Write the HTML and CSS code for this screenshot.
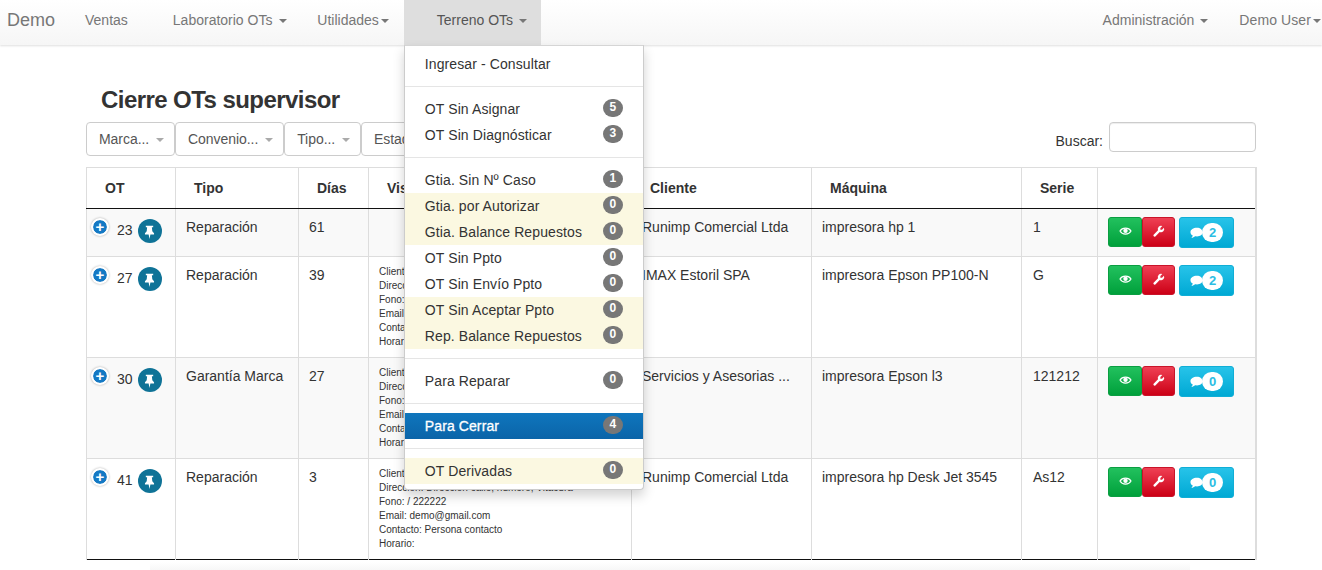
FILE: index.html
```html
<!DOCTYPE html>
<html lang="es">
<head>
<meta charset="utf-8">
<title>Cierre OTs supervisor</title>
<link rel="stylesheet" href="styles.css">
</head>
<body>
<svg class="defs" width="0" height="0" aria-hidden="true">
  <symbol id="i-pin" viewBox="0 0 24 24"><path d="M7.800 5.500h8.400v1.700h-1.500l.5 4.600 2 2.200v1.500h-4.200L12 20.500l-1-5H6.800v-1.500l2-2.200.5-4.600H7.800z"/></symbol>
  <symbol id="i-eye" viewBox="0 0 14 12"><path class="eye-line" d="M1 5.500C3.500 1.200 10.500 1.200 13 5.500C10.500 10 3.500 10 1 5.500z"/><circle cx="7" cy="5.300" r="2.400"/></symbol>
  <symbol id="i-wrench" viewBox="0 0 16 16"><path d="M12.700 1.300A4 4 0 0 0 7.400 6.500L2 11.900A1.500 1.500 0 0 0 4.100 14L9.500 8.600A4 4 0 0 0 14.700 3.300L12.300 5.700H10.300V3.700z"/></symbol>
  <symbol id="i-comment" viewBox="0 0 14 14"><path d="M7.500 2C3.500 2 .5 4 .5 6.700c0 1.500 1 2.800 2.500 3.600-.2 1-.8 1.900-1.500 2.500 1.700-.1 3-.8 4-1.700.6.100 1.300.1 2 .1 3.500 0 6-1.900 6-4.500S11 2 7.500 2z"/></symbol>
</svg>

<nav class="navbar">
  <a class="brand">Demo</a>
  <ul class="nav-list">
    <li class="nav-item nav-item-wide"><a>Ventas</a></li>
    <li class="nav-item"><a>Laboratorio OTs <span class="caret caret-wide"></span></a></li>
    <li class="nav-item"><a>Utilidades<span class="caret"></span></a></li>
    <li class="nav-item nav-item-open">
      <a>Terreno OTs <span class="caret"></span></a>
      <div class="dropdown">
        <a class="dd-item">Ingresar - Consultar</a>
        <hr class="dd-divider">
        <a class="dd-item">OT Sin Asignar <span class="badge">5</span></a>
        <a class="dd-item">OT Sin Diagnósticar <span class="badge">3</span></a>
        <hr class="dd-divider">
        <a class="dd-item">Gtia. Sin Nº Caso <span class="badge">1</span></a>
        <a class="dd-item dd-warn">Gtia. por Autorizar <span class="badge">0</span></a>
        <a class="dd-item dd-warn">Gtia. Balance Repuestos <span class="badge">0</span></a>
        <a class="dd-item">OT Sin Ppto <span class="badge">0</span></a>
        <a class="dd-item">OT Sin Envío Ppto <span class="badge">0</span></a>
        <a class="dd-item dd-warn">OT Sin Aceptar Ppto <span class="badge">0</span></a>
        <a class="dd-item dd-warn">Rep. Balance Repuestos <span class="badge">0</span></a>
        <hr class="dd-divider">
        <a class="dd-item">Para Reparar <span class="badge">0</span></a>
        <hr class="dd-divider">
        <a class="dd-item dd-active">Para Cerrar <span class="badge">4</span></a>
        <hr class="dd-divider">
        <a class="dd-item dd-warn">OT Derivadas <span class="badge">0</span></a>
      </div>
    </li>
  </ul>
  <ul class="nav-list nav-right">
    <li class="nav-item nav-item-admin"><a>Administración <span class="caret"></span></a></li>
    <li class="nav-item nav-item-user"><a>Demo User<span class="caret"></span></a></li>
  </ul>
</nav>

<main class="container">
  <h3 class="title">Cierre OTs supervisor</h3>
  <div class="filters">
    <button class="filter">Marca... <span class="caret caret-light"></span></button>
    <button class="filter">Convenio... <span class="caret caret-light"></span></button>
    <button class="filter">Tipo... <span class="caret caret-light"></span></button>
    <button class="filter">Estado... <span class="caret caret-light"></span></button>
    <label class="search"><span class="search-label">Buscar:</span> <input class="search-input" type="text"></label>
  </div>

  <table class="grid">
    <colgroup>
      <col class="c-ot"><col class="c-tipo"><col class="c-dias"><col class="c-vis"><col class="c-cli"><col class="c-maq"><col class="c-ser"><col class="c-act">
    </colgroup>
    <thead>
      <tr><th>OT</th><th>Tipo</th><th>Días</th><th>Visita</th><th>Cliente</th><th>Máquina</th><th>Serie</th><th></th></tr>
    </thead>
    <tbody>
      <tr class="row-odd row-short">
        <td class="cell-ot"><div class="ot"><span class="plus">+</span><span class="ot-num">23</span><span class="pin"><svg class="pin-svg"><use href="#i-pin"/></svg></span></div></td>
        <td>Reparación</td><td>61</td><td></td><td>Runimp Comercial Ltda</td><td>impresora hp 1</td><td class="cell-serie">1</td>
        <td class="cell-act"><div class="actions">
          <a class="btn btn-green"><svg class="ic-eye"><use href="#i-eye"/></svg></a><a class="btn btn-red"><svg class="ic-wrench"><use href="#i-wrench"/></svg></a><a class="btn btn-blue"><svg class="ic-comment"><use href="#i-comment"/></svg><span class="count">2</span></a>
        </div></td>
      </tr>
      <tr>
        <td class="cell-ot"><div class="ot"><span class="plus">+</span><span class="ot-num">27</span><span class="pin"><svg class="pin-svg"><use href="#i-pin"/></svg></span></div></td>
        <td>Reparación</td><td>39</td>
        <td class="cell-info">Cliente: IMAX Estoril SPA<br>Dirección: Dirección calle, número, Vitacura<br>Fono: / 222222<br>Email: demo@gmail.com<br>Contacto: Persona contacto<br>Horario:</td>
        <td>IMAX Estoril SPA</td><td>impresora Epson PP100-N</td><td class="cell-serie">G</td>
        <td class="cell-act"><div class="actions">
          <a class="btn btn-green"><svg class="ic-eye"><use href="#i-eye"/></svg></a><a class="btn btn-red"><svg class="ic-wrench"><use href="#i-wrench"/></svg></a><a class="btn btn-blue"><svg class="ic-comment"><use href="#i-comment"/></svg><span class="count">2</span></a>
        </div></td>
      </tr>
      <tr class="row-odd">
        <td class="cell-ot"><div class="ot"><span class="plus">+</span><span class="ot-num">30</span><span class="pin"><svg class="pin-svg"><use href="#i-pin"/></svg></span></div></td>
        <td>Garantía Marca</td><td>27</td>
        <td class="cell-info">Cliente: Servicios y Asesorias<br>Dirección: Dirección calle, número, Vitacura<br>Fono: / 222222<br>Email: demo@gmail.com<br>Contacto: Persona contacto<br>Horario:</td>
        <td>Servicios y Asesorias ...</td><td>impresora Epson l3</td><td class="cell-serie">121212</td>
        <td class="cell-act"><div class="actions">
          <a class="btn btn-green"><svg class="ic-eye"><use href="#i-eye"/></svg></a><a class="btn btn-red"><svg class="ic-wrench"><use href="#i-wrench"/></svg></a><a class="btn btn-blue"><svg class="ic-comment"><use href="#i-comment"/></svg><span class="count">0</span></a>
        </div></td>
      </tr>
      <tr>
        <td class="cell-ot"><div class="ot"><span class="plus">+</span><span class="ot-num">41</span><span class="pin"><svg class="pin-svg"><use href="#i-pin"/></svg></span></div></td>
        <td>Reparación</td><td>3</td>
        <td class="cell-info">Cliente: Runimp Comercial Ltda<br>Dirección: Dirección calle, número, Vitacura<br>Fono: / 222222<br>Email: demo@gmail.com<br>Contacto: Persona contacto<br>Horario:</td>
        <td>Runimp Comercial Ltda</td><td>impresora hp Desk Jet 3545</td><td class="cell-serie">As12</td>
        <td class="cell-act"><div class="actions">
          <a class="btn btn-green"><svg class="ic-eye"><use href="#i-eye"/></svg></a><a class="btn btn-red"><svg class="ic-wrench"><use href="#i-wrench"/></svg></a><a class="btn btn-blue"><svg class="ic-comment"><use href="#i-comment"/></svg><span class="count">0</span></a>
        </div></td>
      </tr>
    </tbody>
  </table>
  <div class="foot-shade"></div>
</main>
</body>
</html>
```

FILE: styles.css
```css
* { box-sizing: border-box; }
html, body { margin: 0; padding: 0; overflow: hidden; }
body {
  height: 570px;
  background: #fff;
  color: #333;
  font-family: "Liberation Sans", Arial, sans-serif;
  font-size: 14px;
  line-height: 20px;
}
.defs { position: absolute; }

/* Navbar */
.navbar {
  display: flex;
  height: 45px;
  padding-left: 7px;
  background: linear-gradient(to bottom, #fff 0%, #f6f6f6 100%);
  box-shadow: 0 1px 2px rgba(0, 0, 0, .13);
  color: #777;
}
.brand {
  width: 48px;
  margin-right: 15px;
  font-size: 18px;
  line-height: 41px;
}
.nav-list { display: flex; margin: 0; padding: 0; list-style: none; }
.nav-right { margin-left: auto; padding-right: 1px; }
.nav-item { position: relative; padding: 10px 15px 0; height: 45px; white-space: nowrap; }
.nav-item-wide { margin-right: 15px; }
.nav-item-open { padding: 10px 15px 0 33px; width: 137px; background: #dedede; color: #555; }
.nav-item-admin { padding-right: 16px; }
.nav-item-user { padding: 10px 0 0 15px; letter-spacing: .1px; }
.caret {
  display: inline-block;
  width: 0;
  height: 0;
  margin-left: 2px;
  vertical-align: middle;
  border-top: 4px solid #777;
  border-left: 4px solid transparent;
  border-right: 4px solid transparent;
}
.caret-wide { margin-left: 3px; }
.caret-light { border-top-color: #aaa; margin-left: 3px; }

/* Dropdown */
.dropdown {
  position: absolute;
  top: 45px;
  left: 0;
  z-index: 10;
  width: 240px;
  padding: 5px 0;
  background: #fff;
  border: 1px solid #ccc;
  border-top-color: #d5d5d5;
  border-radius: 0 0 4px 4px;
  box-shadow: 0 6px 12px rgba(0, 0, 0, .175);
  color: #333;
}
.dd-item {
  display: flex;
  justify-content: space-between;
  height: 26px;
  padding: 3px 20px;
  letter-spacing: .1px;
  white-space: nowrap;
}
.dd-warn { background: #fbf8e1; }
.dd-active { background: linear-gradient(to bottom, #0f76bd, #0b64a8); color: #fff; -webkit-text-stroke: .3px #fff; }
.dd-divider { height: 1px; margin: 9px 0; border: 0; background: #e5e5e5; }
.badge {
  display: block;
  width: 20px;
  height: 18px;
  border-radius: 10px;
  background: #777;
  color: #fff;
  font-size: 12px;
  font-weight: 700;
  line-height: 17px;
  text-align: center;
  -webkit-text-stroke: 0;
}

/* Content */
.container { width: 1170px; margin-left: 86px; }
.title {
  height: 26px;
  margin: 42px 0 9px;
  padding-left: 15px;
  font-size: 24px;
  font-weight: 700;
  letter-spacing: -.56px;
  line-height: 26px;
}
.filters { display: flex; align-items: flex-start; height: 34px; margin-bottom: 11px; }
.filter {
  height: 34px;
  padding: 0 10px 0 12px;
  background: #fff;
  border: 1px solid #ccc;
  border-radius: 4px;
  color: #555;
  font: inherit;
  letter-spacing: -.05px;
  white-space: nowrap;
}
.search { display: flex; gap: 6px; margin-left: auto; color: #333; }
.search-label { margin-top: 9px; }
.search-input {
  width: 147px;
  height: 30px;
  background: #fff;
  border: 1px solid #ccc;
  border-radius: 4px;
  box-shadow: inset 0 1px 1px rgba(0, 0, 0, .075);
}

/* Table */
.grid {
  width: 1169px;
  border-collapse: collapse;
  table-layout: fixed;
  border-top: 1px solid #ddd;
  border-left: 1px solid #ddd;
  border-right: 2px solid #ddd;
  border-bottom: 1px solid #111;
}
.c-ot { width: 89px; }
.c-tipo { width: 123px; }
.c-dias { width: 70px; }
.c-vis { width: 263px; }
.c-cli { width: 180px; }
.c-maq { width: 210px; }
.c-ser { width: 76px; }
.c-act { width: 158px; }
.grid th {
  height: 41px;
  padding: 0 18px;
  border-left: 1px solid #ddd;
  border-bottom: 1px solid #111;
  font-weight: 700;
  text-align: left;
  vertical-align: middle;
  white-space: nowrap;
}
.grid td {
  padding: 8px 10px;
  border-left: 1px solid #ddd;
  border-top: 1px solid #ddd;
  vertical-align: top;
  white-space: nowrap;
  overflow: hidden;
}
.grid tbody tr:first-child td { border-top: 0; }
.row-odd { background: #f9f9f9; }
.row-short td { height: 48px; }
.grid .cell-ot { padding: 10px 0 0 5px; overflow: visible; }
.grid .cell-serie { padding-left: 11px; }
.grid .cell-info { padding-left: 10px; font-size: 10px; line-height: 14px; }
.grid .cell-act { padding-left: 10px; }

.ot { display: flex; align-items: flex-start; }
.plus {
  width: 16px;
  height: 16px;
  border: 1px solid #fff;
  border-radius: 50%;
  background: #1479c4;
  background-clip: padding-box;
  box-shadow: 0 0 0 1px #fff, 0 0 2px 1.500px rgba(0, 0, 0, .2);
  color: #fff;
  font-size: 15px;
  font-weight: 700;
  line-height: 13px;
  text-align: center;
}
.ot-num { margin: 1px 5px 0 9px; line-height: 20px; }
.pin {
  display: flex;
  align-items: center;
  justify-content: center;
  width: 24px;
  height: 24px;
  border-radius: 50%;
  background: #0f7397;
}
.pin-svg { width: 21px; height: 21px; fill: #fff; }

.actions { display: flex; align-items: flex-start; }
.btn {
  display: flex;
  align-items: center;
  justify-content: center;
  height: 30px;
  border-radius: 3px;
  border: 1px solid transparent;
}
.btn-green { width: 34px; background: linear-gradient(to bottom, #22c15e, #00a03b); border-color: #0b9e42; }
.btn-red { width: 33px; background: linear-gradient(to bottom, #ef4054, #cc0016); border-color: #c9142a; }
.btn-blue {
  width: 55px;
  height: 31px;
  margin-left: 4px;
  background: linear-gradient(to bottom, #27c3e9, #00a9d4);
  border-color: #10aed6;
  justify-content: flex-start;
  padding-left: 10px;
}
.ic-eye { width: 13px; height: 11px; margin-top: -2px; fill: #fff; }
.eye-line { fill: none; stroke: #fff; stroke-width: 1.300; }
.ic-wrench { width: 13px; height: 13px; margin-top: -1px; fill: #fff; }
.ic-comment { width: 13px; height: 13px; fill: #fff; flex: none; }
.count {
  width: 21px;
  height: 19px;
  margin-top: -1px;
  margin-left: -1px;
  border-radius: 10px;
  background: #fff;
  color: #2bbde3;
  font-size: 13px;
  font-weight: 700;
  line-height: 19px;
  text-align: center;
}
.foot-shade {
  width: 1040px;
  height: 8px;
  margin: 2px 0 0 64px;
  background: linear-gradient(to bottom, #fff, #f7f7f7);
}
```
